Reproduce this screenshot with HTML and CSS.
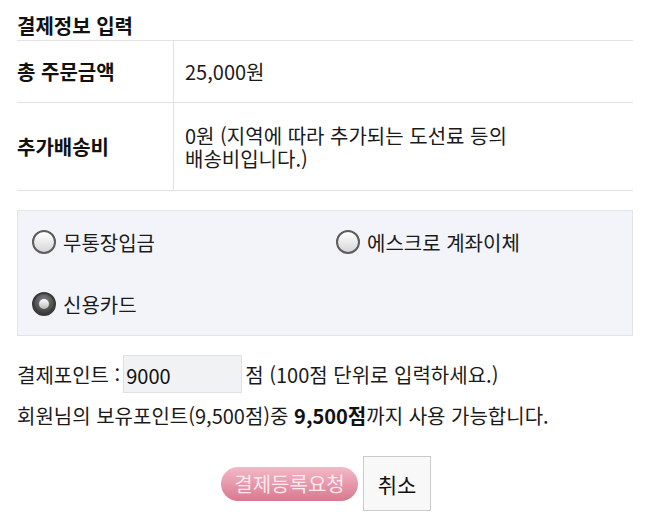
FILE: index.html
```html
<!DOCTYPE html>
<html lang="ko">
<head>
<meta charset="utf-8">
<link rel="stylesheet" href="styles.css">
</head>
<body>
<div class="wrap">
  <h2 class="title">결제정보 입력</h2>
  <table class="info">
    <tr class="r1">
      <th>총 주문금액</th>
      <td>25,000원</td>
    </tr>
    <tr class="r2">
      <th>추가배송비</th>
      <td><span class="val">0원 (지역에 따라 추가되는 도선료 등의 배송비입니다.)</span></td>
    </tr>
  </table>

  <div class="methods">
    <label class="opt"><span class="radio"></span>무통장입금</label>
    <label class="opt"><span class="radio"></span>에스크로 계좌이체</label>
    <label class="opt"><span class="radio on"></span>신용카드</label>
  </div>

  <div class="point">
    <span>결제포인트 :</span>
    <input class="pt-input" type="text" value="9000">
    <span>점 (100점 단위로 입력하세요.)</span>
  </div>
  <p class="avail">회원님의 보유포인트(9,500점)중 <b>9,500점</b>까지 사용 가능합니다.</p>

  <div class="actions">
    <button class="btn-pay" type="button">결제등록요청</button>
    <button class="btn-cancel" type="button">취소</button>
  </div>
</div>
</body>
</html>
```

FILE: styles.css
```css
html, body {
  margin: 0;
  padding: 0;
  background: #fff;
}
body {
  font-family: "Noto Sans CJK KR", "Noto Sans", sans-serif;
  font-size: 20px;
  color: #1a1a1a;
  word-break: keep-all;
}
.wrap {
  padding: 0 17px;
}
.title {
  margin: 0;
  padding: 12px 0 1px;
  font-size: 20px;
  line-height: 27px;
  font-weight: 700;
  color: #111;
}
.info {
  width: 100%;
  border-collapse: collapse;
  border-top: 1px solid #e2e2e2;
}
.info tr {
  border-bottom: 1px solid #e2e2e2;
}
.info th {
  width: 156px;
  padding: 0;
  text-align: left;
  font-weight: 700;
  color: #111;
  border-right: 1px solid #e2e2e2;
}
.info td {
  padding: 0 0 0 11px;
  color: #1a1a1a;
}
.r1 th, .r1 td {
  height: 61px;
}
.r2 th, .r2 td {
  height: 87px;
}
.val {
  display: block;
  line-height: 23px;
}
.methods {
  margin-top: 19px;
  background: #f2f4f9;
  border: 1px solid #e2e4e8;
  display: grid;
  grid-template-columns: 304px 1fr;
  grid-auto-rows: 62px;
  padding-left: 14px;
}
.opt {
  display: flex;
  align-items: center;
  gap: 7px;
  color: #1a1a1a;
}
.radio {
  width: 24px;
  height: 24px;
  box-sizing: border-box;
  border-radius: 50%;
  border: 2px solid #5c5c5c;
  background: linear-gradient(#ffffff, #d6d6d6);
  position: relative;
  flex: none;
}
.radio.on {
  border-color: #3a3a3a;
  background: radial-gradient(circle at 50% 35%, #8a8a8a, #3c3c3c 75%);
}
.radio.on::after {
  content: "";
  position: absolute;
  left: 5px;
  top: 5px;
  width: 10px;
  height: 10px;
  border-radius: 50%;
  background: linear-gradient(#ffffff, #b8b8b8);
}
.point {
  margin-top: 19px;
  display: flex;
  align-items: center;
  gap: 3px;
  height: 38px;
}
.pt-input {
  width: 119px;
  height: 38px;
  box-sizing: border-box;
  border: 1px solid #e0e0e0;
  background: #f1f2f4;
  font: inherit;
  color: #111;
  padding: 3px 2px 0;
  margin: 0;
}
.avail {
  margin: 10px 0 0;
  line-height: 26px;
}
.avail b {
  font-weight: 700;
  color: #111;
}
.actions {
  margin-top: 27px;
  display: flex;
  justify-content: center;
  align-items: center;
  gap: 5px;
  padding-left: 2px;
}
.btn-pay {
  width: 137px;
  height: 34px;
  border: none;
  border-radius: 17px;
  background: linear-gradient(#f3b9c6, #d9788f);
  color: #fce8ee;
  font: inherit;
  font-size: 20px;
  line-height: 34px;
  padding: 0;
}
.btn-cancel {
  width: 68px;
  height: 55px;
  border: 1px solid #cacaca;
  background: #f8f8f8;
  color: #111;
  font: inherit;
  font-size: 21px;
  padding: 0;
}
```
